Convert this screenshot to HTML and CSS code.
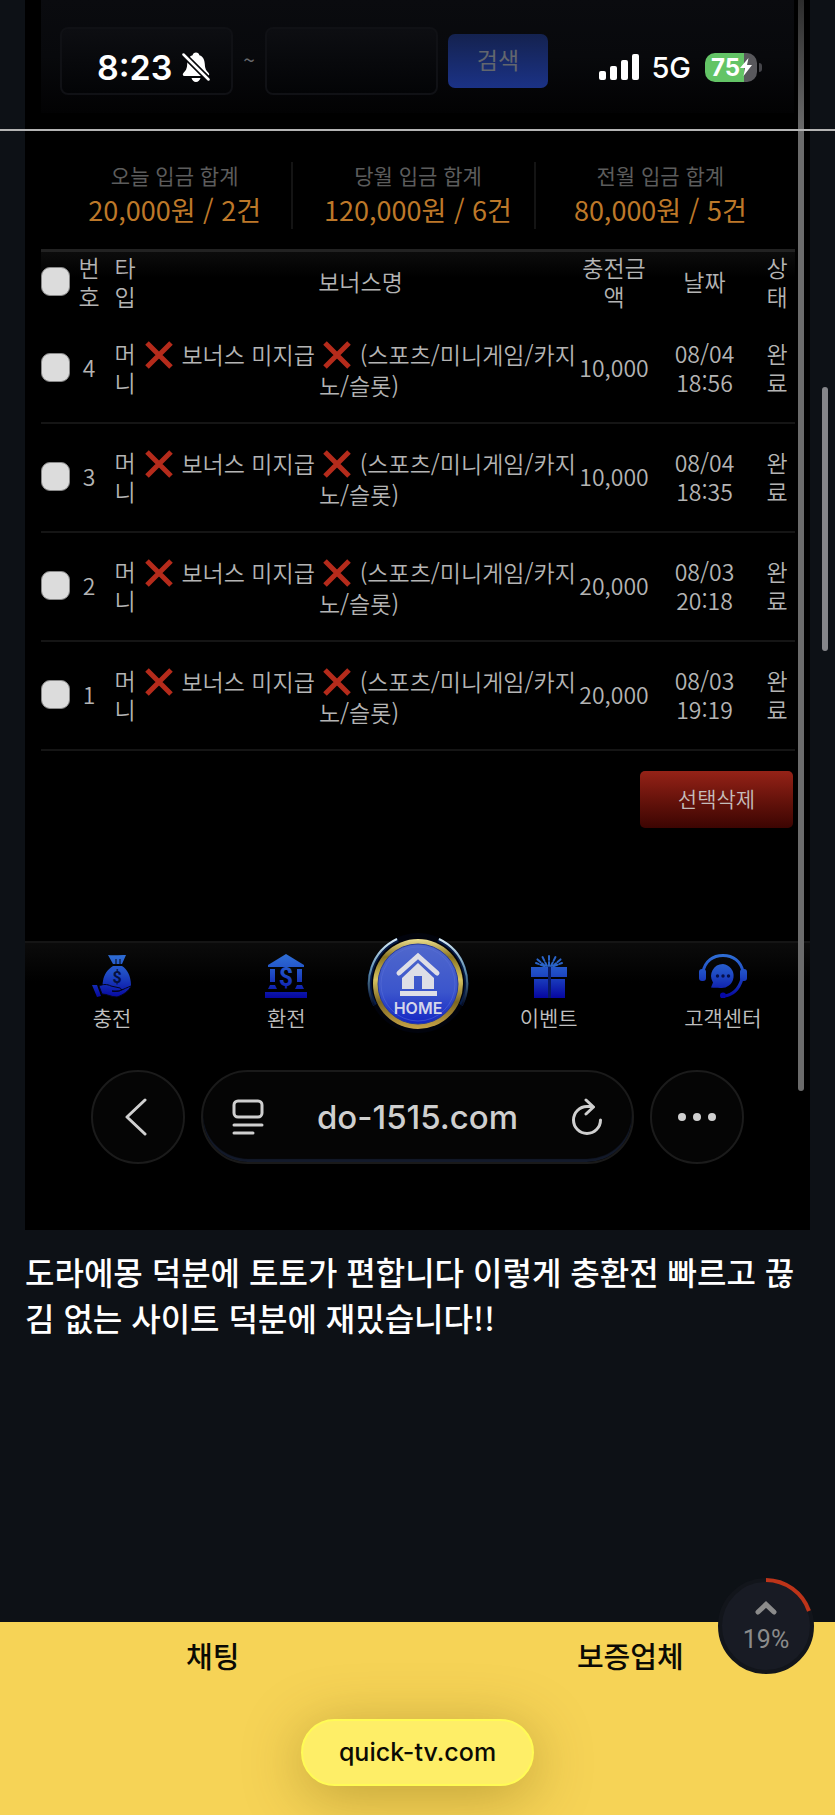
FILE: index.html
```html
<!DOCTYPE html>
<html lang="ko">
<head>
    <meta charset="UTF-8">
    <meta name="viewport" content="width=device-width, initial-scale=1.0">
    <title>quick-tv.com</title>
    <link rel="stylesheet" href="styles.css">
</head>
<body>
    <!-- icon shared by every bonus row -->
    <svg class="sprite" aria-hidden="true">
        <symbol id="cross" viewBox="0 0 28 28">
            <path d="M2 2 26 26M26 2 2 26" stroke="#b52b1b" stroke-width="5"/>
        </symbol>
    </svg>

    <header class="status-bar">
        <div class="status-time">
            <span class="clock">8:23</span>
            <svg width="28" height="32" viewBox="0 0 28 32">
                <path d="M14 1.500c-1.800 0-3.200 1.200-3.400 2.700C6.800 5.600 5.500 8.800 5.200 13c-.3 5-1.400 6.500-3.400 8.500C.2 23 .5 25 2.500 25h23c2 0 2.300-2 .7-3.500-2-2-3.100-3.500-3.400-8.500-.3-4.200-1.600-7.400-5.400-8.800C17.200 2.700 15.800 1.500 14 1.500zM9.500 27h9c-.6 2.300-2.200 4-4.500 4s-3.900-1.700-4.500-4z" fill="#fff"/>
                <path d="M1.500 3.500 26.500 28.500" stroke="#050609" stroke-width="6"/>
                <path d="M1.500 3.500 26.500 28.500" stroke="#fff" stroke-width="2.500" stroke-linecap="round"/>
            </svg>
        </div>
        <div class="status-icons">
            <svg width="40" height="26" viewBox="0 0 40 26" fill="#fff">
                <rect x="0" y="17" width="7" height="9" rx="2"/>
                <rect x="11" y="12" width="7" height="14" rx="2"/>
                <rect x="22" y="6" width="7" height="20" rx="2"/>
                <rect x="33" y="0" width="7" height="26" rx="2"/>
            </svg>
            <span class="network">5G</span>
            <span class="battery">
                <span class="battery-level">75</span>
                <svg width="12" height="18" viewBox="0 0 12 18"><path d="M8.500 0 0 10h5L3.500 18 12 7H7z" fill="#fff"/></svg>
            </span>
        </div>
    </header>

    <main>
        <div class="shot">
            <form class="search">
                <input type="text" class="date-input" aria-label="시작일">
                <span class="tilde">~</span>
                <input type="text" class="date-input" aria-label="종료일">
                <button type="button" class="search-btn">검색</button>
            </form>

            <div class="totals">
                <div class="total"><span>오늘 입금 합계</span><strong>20,000원 / 2건</strong></div>
                <div class="total"><span>당월 입금 합계</span><strong>120,000원 / 6건</strong></div>
                <div class="total"><span>전월 입금 합계</span><strong>80,000원 / 5건</strong></div>
            </div>

            <table class="history">
                <thead>
                    <tr>
                        <th class="col-check"><input type="checkbox" aria-label="전체 선택"></th>
                        <th class="col-num">번호</th>
                        <th class="col-type">타입</th>
                        <th>보너스명</th>
                        <th class="col-amount">충전금액</th>
                        <th class="col-date">날짜</th>
                        <th class="col-state">상태</th>
                    </tr>
                </thead>
                <tbody>
                    <tr>
                        <td><input type="checkbox" aria-label="4번 선택"></td>
                        <td>4</td>
                        <td>머니</td>
                        <td class="bonus"><svg class="cross"><use href="#cross"/></svg> 보너스 미지급 <svg class="cross"><use href="#cross"/></svg> (스포츠/미니게임/카지<br>노/슬롯)</td>
                        <td class="amount">10,000</td>
                        <td>08/04 18:56</td>
                        <td>완료</td>
                    </tr>
                    <tr>
                        <td><input type="checkbox" aria-label="3번 선택"></td>
                        <td>3</td>
                        <td>머니</td>
                        <td class="bonus"><svg class="cross"><use href="#cross"/></svg> 보너스 미지급 <svg class="cross"><use href="#cross"/></svg> (스포츠/미니게임/카지<br>노/슬롯)</td>
                        <td class="amount">10,000</td>
                        <td>08/04 18:35</td>
                        <td>완료</td>
                    </tr>
                    <tr>
                        <td><input type="checkbox" aria-label="2번 선택"></td>
                        <td>2</td>
                        <td>머니</td>
                        <td class="bonus"><svg class="cross"><use href="#cross"/></svg> 보너스 미지급 <svg class="cross"><use href="#cross"/></svg> (스포츠/미니게임/카지<br>노/슬롯)</td>
                        <td class="amount">20,000</td>
                        <td>08/03 20:18</td>
                        <td>완료</td>
                    </tr>
                    <tr>
                        <td><input type="checkbox" aria-label="1번 선택"></td>
                        <td>1</td>
                        <td>머니</td>
                        <td class="bonus"><svg class="cross"><use href="#cross"/></svg> 보너스 미지급 <svg class="cross"><use href="#cross"/></svg> (스포츠/미니게임/카지<br>노/슬롯)</td>
                        <td class="amount">20,000</td>
                        <td>08/03 19:19</td>
                        <td>완료</td>
                    </tr>
                </tbody>
            </table>

            <div class="actions">
                <button type="button" class="delete-btn">선택삭제</button>
            </div>

            <nav class="site-nav">
                <a href="#">
                    <svg width="44" height="44" viewBox="0 0 44 44">
                        <defs>
                            <linearGradient id="blue" gradientUnits="userSpaceOnUse" x1="0" y1="0" x2="0" y2="44">
                                <stop offset="0" stop-color="#2f6fd6"/>
                                <stop offset="0.45" stop-color="#1f4bc4"/>
                                <stop offset="1" stop-color="#0606a0"/>
                            </linearGradient>
                        </defs>
                        <path d="M18 1c6 1 12-.500 18 0l-4 9h-9z" fill="url(#blue)"/>
                        <path d="M23 12h9c5 3 9 10 9 19 0 2-1 3-3 4H16c-3-1-4-4-3-8 1-7 5-12 10-15z" fill="url(#blue)"/>
                        <path d="M26 5v5M30 5v5" stroke="#05070c"/>
                        <text x="27" y="29" class="coin" font-size="16" fill="#05103f">$</text>
                        <path d="M2 31l5 0 4 11-4 1z" fill="url(#blue)"/>
                        <path d="M9 32c4-2 8-2 12 0l9 2c2 1 1 3-1 3h-7c6 2 11-2 19-5-2 5-8 9-14 11-6 0-10-3-15-3z" fill="url(#blue)" stroke="#03051c" stroke-width="1"/>
                    </svg>
                    <span>충전</span>
                </a>
                <a href="#">
                    <svg width="44" height="44" viewBox="0 0 44 44">
                        <path d="M22 0 40 11v2H4v-2z" fill="url(#blue)"/>
                        <path d="M6 15h5v13H6zM33 15h5v13h-5zM6 31h5l2 4H4zM33 31h5l2 4h-9zM1 38h42v6H1z" fill="url(#blue)"/>
                        <text x="22" y="32" class="coin" font-size="25" fill="url(#blue)">$</text>
                    </svg>
                    <span>환전</span>
                </a>
                <a href="#" class="home" aria-label="HOME">
                    <svg width="104" height="104" viewBox="0 0 104 104">
                        <defs>
                            <linearGradient id="gold" x1="0" y1="0" x2="0" y2="1">
                                <stop offset="0" stop-color="#eee08e"/>
                                <stop offset="0.2" stop-color="#8a7420"/>
                                <stop offset="0.45" stop-color="#d8c460"/>
                                <stop offset="0.7" stop-color="#7d6722"/>
                                <stop offset="1" stop-color="#c7a346"/>
                            </linearGradient>
                            <linearGradient id="disc" x1="0" y1="0" x2="0" y2="1">
                                <stop offset="0" stop-color="#5068cc"/>
                                <stop offset="0.6" stop-color="#3b55cc"/>
                                <stop offset="1" stop-color="#1426c4"/>
                            </linearGradient>
                            <linearGradient id="edge" x1="0" y1="0" x2="0" y2="1">
                                <stop offset="0" stop-color="#d8ecf6"/>
                                <stop offset="0.5" stop-color="#5b8cab"/>
                                <stop offset="1" stop-color="#040a20"/>
                            </linearGradient>
                        </defs>
                        <circle cx="52" cy="52" r="50" fill="#01030c"/>
                        <path d="M32 9A47 47 0 0 0 9 74M72 9A47 47 0 0 1 95 74" fill="none" stroke="#061c48" stroke-width="4"/>
                        <path d="M31 8A49 49 0 0 0 8 74M73 8A49 49 0 0 1 96 74" fill="none" stroke="url(#edge)" stroke-width="2"/>
                        <circle cx="52" cy="53" r="45" fill="url(#gold)"/>
                        <circle cx="52" cy="53" r="40" fill="url(#disc)" stroke="#263a9c"/>
                        <circle cx="52" cy="53" r="37" fill="none" stroke="#5a70d8" stroke-opacity="0.500"/>
                        <path d="M33 42 52 25 71 42" fill="none" stroke="#dedee6" stroke-width="5" stroke-linecap="round"/>
                        <path d="M52 32 68 47v11H56V45h-8v13H36V47zM34 60h37v5H34z" fill="#dedee6"/>
                        <text x="52" y="83" class="home-text">HOME</text>
                    </svg>
                </a>
                <a href="#">
                    <svg width="44" height="44" viewBox="0 0 44 44">
                        <path d="M4 13h36v10H4zM7 25h14v19H7zM24 25h14v19H24z" fill="url(#blue)"/>
                        <path d="M21 13v31h3V13z" fill="#091a62"/>
                        <g stroke="#2a64c8" stroke-width="2" stroke-linecap="round" stroke-dasharray="4 2">
                            <path d="M22 12V1M20 12 15 2M24 12 29 2M18 12 10 5M26 12 34 5M17 12 9 9M27 12 35 9"/>
                        </g>
                    </svg>
                    <span>이벤트</span>
                </a>
                <a href="#">
                    <svg width="48" height="44" viewBox="0 0 48 44">
                        <path d="M4 18C6 7 14 1.500 24 1.500S42 7 44 18M43 25C40 35 34 41 25 42" fill="none" stroke="url(#blue)" stroke-width="3"/>
                        <rect x="0" y="15" width="7" height="12" rx="3" fill="url(#blue)"/>
                        <rect x="41" y="15" width="7" height="12" rx="3" fill="url(#blue)"/>
                        <path d="M24 10a12 12 0 1 1-3 24c-3-.5-6 0-9-.5l2-5A12 12 0 0 1 24 10z" fill="url(#blue)"/>
                        <circle cx="24" cy="41.500" r="3" fill="#0608a6"/>
                        <g fill="#06104a"><circle cx="18.500" cy="22" r="1.700"/><circle cx="24" cy="22" r="1.700"/><circle cx="29.500" cy="22" r="1.700"/></g>
                    </svg>
                    <span>고객센터</span>
                </a>
            </nav>

            <div class="browser-bar">
                <button type="button" class="round-btn" aria-label="뒤로">
                    <svg width="28" height="38" viewBox="0 0 28 38"><path d="M21 2 3 19 21 36" fill="none" stroke="#d0d0d0" stroke-width="3" stroke-linecap="round" stroke-linejoin="round"/></svg>
                </button>
                <div class="url-bar">
                    <svg width="32" height="36" viewBox="0 0 32 36" fill="none" stroke="#cfcfcf" stroke-width="3" stroke-linecap="round">
                        <rect x="2" y="2" width="28" height="16" rx="4"/>
                        <path d="M2 26h28M2 34h19"/>
                    </svg>
                    <span>do-1515.com</span>
                    <svg width="32" height="38" viewBox="0 0 32 38" fill="none" stroke="#cfcfcf" stroke-width="3" stroke-linecap="round" stroke-linejoin="round">
                        <path d="M22 8.500H16A13.500 13.500 0 1 0 29.500 22M15 2l7.500 7L15 16"/>
                    </svg>
                </div>
                <button type="button" class="round-btn" aria-label="더보기">
                    <svg width="40" height="8" viewBox="0 0 40 8" fill="#d0d0d0"><circle cx="5" cy="4" r="4"/><circle cx="20" cy="4" r="4"/><circle cx="35" cy="4" r="4"/></svg>
                </button>
            </div>

            <div class="shot-scrollbar"></div>
        </div>

        <p class="comment">도라에몽 덕분에 토토가 편합니다 이렇게 충환전 빠르고 끊김 없는 사이트 덕분에 재밌습니다!!</p>
    </main>

    <footer class="bottom">
        <div class="tabs">
            <a href="#">채팅</a>
            <a href="#">보증업체</a>
        </div>
        <a href="#" class="domain">quick-tv.com</a>
        <button type="button" class="to-top" aria-label="맨 위로">
            <svg class="ring" width="96" height="96" viewBox="0 0 96 96">
                <circle cx="48" cy="48" r="46" fill="#181b24" stroke="#12151b" stroke-width="4"/>
                <path d="M48 2A46 46 0 0 1 91 33" fill="none" stroke="#bd3419" stroke-width="4"/>
            </svg>
            <svg class="arrow" width="22" height="14" viewBox="0 0 22 14"><path d="M3 11 11 3.500 19 11" fill="none" stroke="#8b8b8b" stroke-width="5" stroke-linecap="round"/></svg>
            <span>19%</span>
        </button>
    </footer>

    <div class="page-scrollbar"></div>
</body>
</html>
```

FILE: styles.css
```css
* {
    box-sizing: border-box;
    margin: 0;
    padding: 0;
}

body {
    position: relative;
    display: flex;
    flex-direction: column;
    min-height: 100vh;
    background-color: #0d1116;
    color: #fff;
    font-family: "Noto Sans CJK KR", "Noto Sans", sans-serif;
}

a {
    color: inherit;
    text-decoration: none;
}

button {
    border: none;
    font-family: inherit;
    cursor: pointer;
}

main {
    flex: 1;
}

.sprite {
    position: absolute;
    width: 0;
    height: 0;
}

/* phone status bar, lies over the page */
.status-bar {
    position: absolute;
    z-index: 2;
    top: 0;
    left: 0;
    right: 0;
    height: 131px;
    padding: 47px 78px 0 97px;
    display: flex;
    justify-content: space-between;
    align-items: flex-start;
    border-bottom: 2px solid #b4b4b4;
    font-family: Inter, sans-serif;
}

.status-time,
.status-icons {
    display: flex;
    align-items: center;
    height: 40px;
}

.status-time {
    gap: 10px;
}

.clock {
    font-size: 34px;
    font-weight: 600;
}

.network {
    margin: 0 14px 0 12px;
    font-size: 29px;
    font-weight: 500;
}

.battery {
    position: relative;
    display: flex;
    align-items: center;
    width: 52px;
    height: 29px;
    padding-left: 6px;
    border-radius: 10px;
    background: linear-gradient(90deg, #63c466 75%, #58585c 75%);
}

.battery::after {
    content: "";
    position: absolute;
    right: -5px;
    top: 10px;
    width: 3px;
    height: 9px;
    border-radius: 0 3px 3px 0;
    background-color: #45454a;
}

.battery-level {
    font-size: 24px;
    font-weight: 700;
}

/* cash history page */
.shot {
    position: relative;
    margin: 0 25px;
    padding-bottom: 66px;
    background-color: #000;
}

.search {
    display: flex;
    align-items: center;
    height: 113px;
    margin: 0 16px;
    padding: 8px 19px 0;
    background: linear-gradient(#0a0b0f, #08090c 50%, #020203);
}

.date-input {
    width: 173px;
    height: 68px;
    border: 2px solid #101115;
    border-radius: 8px;
    background: linear-gradient(#0d0e12, #030406);
    color: #999;
    font-size: 21px;
}

.tilde {
    width: 32px;
    padding-bottom: 4px;
    text-align: center;
    color: #66676b;
    font-size: 21px;
}

.search-btn {
    width: 100px;
    height: 54px;
    margin-left: 10px;
    padding-bottom: 4px;
    border-radius: 7px;
    background: linear-gradient(#14224f, #1b3286);
    color: #62666e;
    font-size: 23px;
}

.totals {
    display: grid;
    grid-template-columns: repeat(3, 1fr);
    margin: 49px 34px 0 24px;
}

.total {
    display: flex;
    flex-direction: column;
    height: 67px;
    padding-left: 9px;
    text-align: center;
}

.total + .total {
    border-left: 2px solid #141414;
}

.total span {
    color: #5c5c5c;
    font-size: 21px;
    line-height: 26px;
}

.total strong {
    color: #bd7829;
    font-size: 27px;
    font-weight: 400;
    line-height: 44px;
    white-space: nowrap;
}

.history {
    width: calc(100% - 31px);
    margin: 20px 15px 0 16px;
    border-top: 3px solid #222;
    border-spacing: 0;
    table-layout: fixed;
    color: #b4b4b4;
    font-size: 23px;
    line-height: 29px;
    text-align: center;
}

.history th,
.history td {
    padding: 0 6px 2px;
    font-weight: 350;
    vertical-align: middle;
}

.history th {
    height: 63px;
    padding-bottom: 4px;
    background: linear-gradient(#0c0c0c, #000 40%);
}

.history td {
    height: 109px;
    border-bottom: 2px solid #151515;
}

.history .col-check,
.history td:first-child {
    width: 30px;
    padding-left: 0;
    padding-right: 0;
}

.col-num,
.col-type,
.col-state {
    width: 36px;
}

.history .col-amount,
.history .amount {
    width: 72px;
    padding-left: 0;
    padding-right: 0;
}

.col-date {
    width: 109px;
}

.history .bonus {
    padding: 2px 3px 0 0;
    line-height: 31px;
    white-space: nowrap;
}

.cross {
    width: 28px;
    height: 28px;
    margin: 0 2px;
    vertical-align: -5px;
}

.history input {
    appearance: none;
    display: block;
    width: 29px;
    height: 29px;
    border: 1px solid #888;
    border-radius: 9px;
    background-color: #dcdcdc;
}

.actions {
    display: flex;
    justify-content: flex-end;
    margin: 20px 17px 0;
}

.delete-btn {
    width: 153px;
    height: 57px;
    padding-bottom: 3px;
    border-radius: 5px;
    background: linear-gradient(#952217, #5e1009 60%, #3c0502);
    color: #c5bcba;
    font-size: 21px;
    font-weight: 350;
}

.site-nav {
    display: grid;
    grid-template-columns: 1fr 1fr 88px 1fr 1fr;
    height: 112px;
    margin-top: 113px;
    border-top: 2px solid #151515;
    background: linear-gradient(#0b0b0b, #000 36%);
    color: #c0c0c0;
    font-size: 21px;
    font-weight: 350;
    line-height: 30px;
}

.site-nav a {
    display: flex;
    flex-direction: column;
    align-items: center;
    gap: 4px;
    padding-top: 11px;
}

.site-nav svg {
    flex: none;
}

.site-nav .home {
    margin-top: -12px;
    padding-top: 0;
}

.coin {
    font-family: Roboto, sans-serif;
    font-weight: 700;
    text-anchor: middle;
}

.home-text {
    font-family: Inter, sans-serif;
    font-size: 16px;
    font-weight: 600;
    text-anchor: middle;
    fill: #d4d6ea;
}

.browser-bar {
    display: flex;
    gap: 16px;
    margin: 17px 66px 0;
}

.round-btn {
    display: flex;
    flex: none;
    align-items: center;
    justify-content: center;
    width: 94px;
    height: 94px;
    border: 2px solid #1b1b1b;
    border-radius: 50%;
    background-color: #050505;
}

.url-bar {
    display: flex;
    flex: 1;
    align-items: center;
    justify-content: space-between;
    padding: 0 29px;
    border: 2px solid #1a1a1a;
    border-radius: 47px;
    background-color: #050505;
    box-shadow: inset 0 -3px 1px #131a2b;
    color: #cfcfcf;
    font-family: Inter, sans-serif;
    font-size: 33px;
    font-weight: 500;
}

.shot-scrollbar {
    position: absolute;
    top: 0;
    right: 6px;
    width: 6px;
    height: 1091px;
    border-radius: 0 0 3px 3px;
    background: linear-gradient(#2c2c2c, #6b6b6b 131px);
}

.page-scrollbar {
    position: absolute;
    top: 387px;
    right: 7px;
    width: 6px;
    height: 264px;
    border-radius: 3px;
    background-color: #85868a;
}

.comment {
    margin: 18px 25px;
    font-size: 32px;
    font-weight: 500;
    line-height: 46px;
    word-break: break-all;
}

/* bottom bar */
.bottom {
    position: relative;
    display: flex;
    flex-direction: column;
    align-items: center;
    padding-bottom: 29px;
    background-color: #f6d356;
    color: #0b0a04;
}

.tabs {
    display: grid;
    grid-template-columns: 1fr 1fr;
    width: 100%;
    font-size: 29px;
    font-weight: 500;
    line-height: 40px;
    text-align: center;
}

.tabs a {
    padding: 13px 0 44px 8px;
}

.domain {
    padding: 0 36px;
    border: 2px solid #fffb55;
    border-radius: 34px;
    background-color: #feee67;
    box-shadow: 0 10px 60px rgba(90, 70, 0, 0.35);
    font-family: Inter, sans-serif;
    font-size: 25px;
    font-weight: 500;
    line-height: 63px;
}

.to-top {
    position: absolute;
    top: -44px;
    right: 21px;
    display: flex;
    flex-direction: column;
    align-items: center;
    gap: 10px;
    width: 96px;
    height: 96px;
    padding-top: 23px;
    border-radius: 50%;
    background: none;
    color: #8b8b8b;
    font-family: Roboto, sans-serif;
    font-size: 25px;
    line-height: 30px;
}

.to-top .ring {
    position: absolute;
    top: 0;
    left: 0;
}

.to-top .arrow,
.to-top span {
    z-index: 1;
}
```
